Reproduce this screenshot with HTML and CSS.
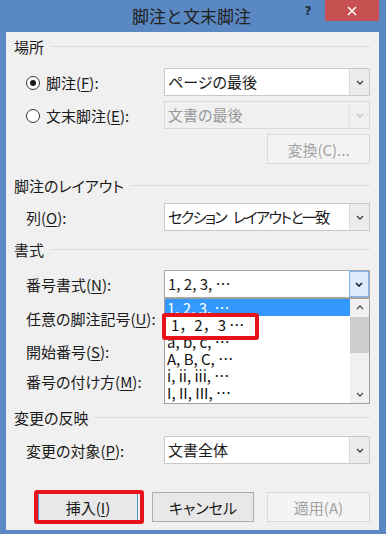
FILE: index.html
```html
<!DOCTYPE html>
<html lang="ja">
<head>
<meta charset="utf-8">
<link rel="stylesheet" href="styles.css">
</head>
<body>
<div class="window">
  <div class="titlebar">
    <div class="title">脚注と文末脚注</div>
    <div class="help">?</div>
    <div class="close">
      <svg width="12" height="12" viewBox="0 0 12 12"><path d="M2 2 L10 10 M10 2 L2 10" stroke="#fff" stroke-width="1.6" fill="none"/></svg>
    </div>
  </div>
  <div class="client">
    <div class="group g-place"><span>場所</span><i></i></div>

    <div class="row r-radio1">
      <div class="label radio-label"><span class="radio on"></span>脚注(<u>F</u>):</div>
      <div class="combo"><span class="val">ページの最後</span><span class="arrow"><svg width="8" height="5" viewBox="0 0 8 5"><path d="M1 1 L4 4 L7 1" stroke="#444" stroke-width="1.4" fill="none"/></svg></span></div>
    </div>

    <div class="row r-radio2">
      <div class="label radio-label"><span class="radio"></span>文末脚注(<u>E</u>):</div>
      <div class="combo disabled"><span class="val">文書の最後</span><span class="arrow"><svg width="8" height="5" viewBox="0 0 8 5"><path d="M1 1 L4 4 L7 1" stroke="#c4c4c4" stroke-width="1.4" fill="none"/></svg></span></div>
    </div>

    <div class="row r-convert">
      <div class="btn disabled convert">変換(C)...</div>
    </div>

    <div class="group g-layout"><span>脚注のレイアウト</span><i></i></div>

    <div class="row r-cols">
      <div class="label">列(<u>O</u>):</div>
      <div class="combo"><span class="val narrow">セクション レイアウトと一致</span><span class="arrow"><svg width="8" height="5" viewBox="0 0 8 5"><path d="M1 1 L4 4 L7 1" stroke="#444" stroke-width="1.4" fill="none"/></svg></span></div>
    </div>

    <div class="group g-format"><span>書式</span><i></i></div>

    <div class="row r-numfmt">
      <div class="label">番号書式(<u>N</u>):</div>
      <div class="combo open">
        <span class="val list-font">1, 2, 3, …</span>
        <span class="arrow hot"><svg width="8" height="5" viewBox="0 0 8 5"><path d="M1 1 L4 4 L7 1" stroke="#222" stroke-width="1.7" fill="none"/></svg></span>
        <div class="popup">
          <div class="items">
            <div class="item sel">1, 2, 3, …</div>
            <div class="item marked"><span class="box"></span>1，2，3 …</div>
            <div class="item">a, b, c, …</div>
            <div class="item">A, B, C, …</div>
            <div class="item">i, ii, iii, …</div>
            <div class="item">I, II, III, …</div>
          </div>
          <div class="scrollbar">
            <div class="sb-btn"><svg width="8" height="5" viewBox="0 0 8 5"><path d="M1 4 L4 1 L7 4" stroke="#555" stroke-width="1.3" fill="none"/></svg></div>
            <div class="sb-thumb"></div>
            <div class="sb-track"></div>
            <div class="sb-btn"><svg width="8" height="5" viewBox="0 0 8 5"><path d="M1 1 L4 4 L7 1" stroke="#555" stroke-width="1.3" fill="none"/></svg></div>
          </div>
        </div>
      </div>
    </div>

    <div class="row r-custom">
      <div class="label">任意の脚注記号(<u>U</u>):</div>
      <div class="combo"></div>
    </div>

    <div class="row r-start">
      <div class="label">開始番号(<u>S</u>):</div>
      <div class="combo"></div>
    </div>

    <div class="row r-numbering">
      <div class="label">番号の付け方(<u>M</u>):</div>
      <div class="combo"></div>
    </div>

    <div class="group g-apply"><span>変更の反映</span><i></i></div>

    <div class="row r-target">
      <div class="label">変更の対象(<u>P</u>):</div>
      <div class="combo"><span class="val">文書全体</span><span class="arrow"><svg width="8" height="5" viewBox="0 0 8 5"><path d="M1 1 L4 4 L7 1" stroke="#444" stroke-width="1.4" fill="none"/></svg></span></div>
    </div>

    <div class="buttons">
      <div class="btn default insert">挿入(<u>I</u>)<span class="mark"></span></div>
      <div class="btn cancel">キャンセル</div>
      <div class="btn disabled apply">適用(A)</div>
    </div>
  </div>
</div>
</body>
</html>
```

FILE: styles.css
```css
* { box-sizing: border-box; }
html, body { margin: 0; padding: 0; background: #fff; }
body {
  font-family: "Noto Sans CJK JP", "Noto Sans", sans-serif;
  font-size: 15px;
  color: #1a1a1a;
  font-feature-settings: "palt";
}
u { text-decoration: underline; text-underline-offset: 2px; text-decoration-thickness: 1px; }

.window {
  width: 386px;
  height: 534px;
  background: #5a88c2;
  padding: 0 7px 0 6px;
  display: flex;
  flex-direction: column;
}
.titlebar {
  height: 32px;
  display: flex;
  align-items: flex-start;
  margin: 0 -7px 0 -6px;
}
.title {
  width: 299px;
  padding-left: 84px;
  text-align: center;
  font-size: 17px;
  line-height: 32px;
  color: #222;
  white-space: nowrap;
  font-feature-settings: normal;
}
.help {
  width: 18px;
  height: 22px;
  line-height: 22px;
  text-align: center;
  font-family: "DejaVu Sans", sans-serif;
  font-weight: bold;
  font-size: 12px;
  color: #1e2a3a;
}
.close {
  margin-left: 8px;
  width: 54px;
  height: 21px;
  background: #c75050;
  display: flex;
  align-items: center;
  justify-content: center;
}
.client {
  background: #f0f0f0;
  height: 498px;
  padding: 0 9px 0 8px;
  display: flex;
  flex-direction: column;
}

.group {
  height: 18px;
  display: flex;
  align-items: center;
  white-space: nowrap;
  line-height: 18px;
  color: #1a1a1a;
}
.group i {
  flex: 1;
  height: 1px;
  background: #dcdcdc;
  margin-left: 6px;
  margin-top: -2px;
}
.g-place { margin-top: 6px; }
.g-layout { margin-top: 13px; }
.g-format { margin-top: 10px; }
.g-apply { margin-top: 14px; }

.row {
  height: 28px;
  display: flex;
  align-items: center;
}
.r-radio1 { margin-top: 12px; }
.r-radio2 { margin-top: 5px; }
.r-convert { margin-top: 5px; height: 30px; justify-content: flex-end; }
.r-cols { margin-top: 8px; }
.r-numfmt { margin-top: 11px; }
.r-custom { margin-top: 6px; }
.r-start { margin-top: 5px; }
.r-numbering { margin-top: 2px; }
.r-target { margin-top: 9px; }

.label {
  width: 150px;
  padding-left: 12px;
  white-space: nowrap;
  line-height: 20px;
  margin-top: 2px;
}
.radio-label {
  display: flex;
  align-items: center;
}
.radio {
  width: 14px;
  height: 14px;
  border: 1px solid #333;
  border-radius: 50%;
  background: #fff;
  margin-right: 6px;
  position: relative;
  flex: none;
}
.radio.on::after {
  content: "";
  position: absolute;
  left: 3px;
  top: 3px;
  width: 6px;
  height: 6px;
  border-radius: 50%;
  background: #1a1a1a;
}

.combo {
  position: relative;
  width: 206px;
  height: 28px;
  background: #fff;
  border: 1px solid #c9c9c9;
  display: flex;
  align-items: center;
}
.combo .val {
  flex: 1;
  padding-left: 3px;
  white-space: nowrap;
  line-height: 26px;
  overflow: hidden;
}
.combo .val.narrow { letter-spacing: -1.6px; word-spacing: 5px; }
.combo .arrow {
  width: 20px;
  height: 26px;
  background: #ececec;
  border-left: 1px solid #dadada;
  display: flex;
  align-items: center;
  justify-content: center;
  flex: none;
}
.combo.disabled {
  background: #f0f0f0;
  border-color: #d9d9d9;
  color: #9a9a9a;
}
.combo.disabled .arrow {
  background: #f0f0f0;
  border-left-color: #e4e4e4;
}
.combo .arrow.hot {
  background: #dcecfc;
  border: 1px solid #7eb4ea;
}
.combo.open { border-color: #a8a8a8; z-index: 2; }

.list-font { font-feature-settings: normal; }

.popup {
  position: absolute;
  left: -1px;
  top: 27px;
  width: 206px;
  height: 106px;
  background: #fff;
  border: 1px solid #a0a0a0;
  display: flex;
}
.items {
  flex: 1;
  font-feature-settings: normal;
}
.item {
  height: 17px;
  line-height: 17px;
  padding-left: 2px;
  font-size: 15px;
  color: #111;
  white-space: nowrap;
}
.item.sel {
  background: #3399ff;
  color: #fff;
}
.item.marked {
  position: relative;
  z-index: 1;
  padding-left: 6px;
  line-height: 18px;
}
.item.marked .box {
  position: absolute;
  left: -3px;
  top: -3px;
  width: 97px;
  height: 27px;
  border: 4px solid #e8121a;
  border-radius: 3px;
  background: #fff;
  z-index: -1;
}
.scrollbar {
  width: 19px;
  background: #f0f0f0;
  display: flex;
  flex-direction: column;
}
.sb-btn {
  height: 17px;
  display: flex;
  align-items: center;
  justify-content: center;
}
.sb-thumb {
  height: 36px;
  margin-top: 1px;
  background: #cdcdcd;
}
.sb-track { flex: 1; }

.btn {
  height: 30px;
  border: 1px solid #adadad;
  background: #e8e8e8;
  display: flex;
  align-items: center;
  justify-content: center;
  white-space: nowrap;
  color: #1a1a1a;
}
.btn.disabled {
  background: #f4f4f4;
  border-color: #d9d9d9;
  color: #a3a3a3;
}
.convert { width: 103px; }

.buttons {
  margin-top: 28px;
  display: flex;
  padding-left: 24px;
}
.insert {
  width: 100px;
  position: relative;
  border-color: #4f8fd0;
}
.insert .mark {
  position: absolute;
  left: -5px;
  top: -3px;
  width: 110px;
  height: 34px;
  border: 4px solid #e8121a;
  border-radius: 3px;
}
.cancel { width: 102px; margin-left: 14px; }
.apply { width: 103px; margin-left: 13px; }
```
